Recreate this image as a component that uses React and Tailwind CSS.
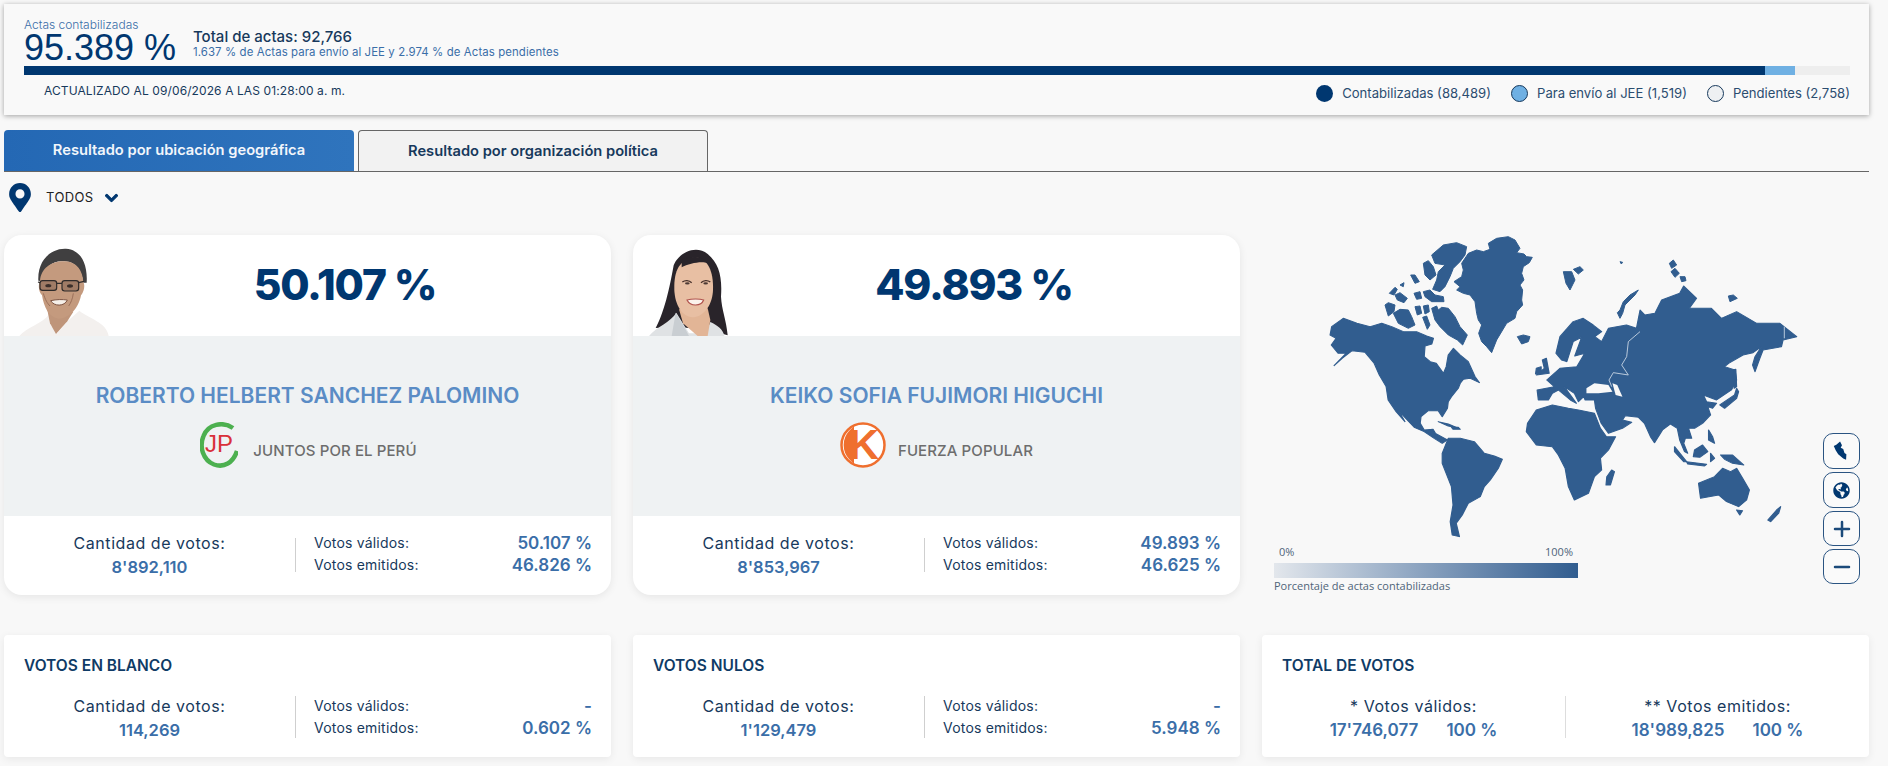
import { FaChevronDown, FaGlobeAmericas, FaMapMarkerAlt } from "react-icons/fa";
import { Minus, Plus } from "lucide-react";

const candidates = [
  {
    pct: "50.107 %",
    name: "ROBERTO HELBERT SANCHEZ PALOMINO",
    party: "JUNTOS POR EL PERÚ",
    votes: "8'892,110",
    valid: "50.107 %",
    cast: "46.826 %",
  },
  {
    pct: "49.893 %",
    name: "KEIKO SOFIA FUJIMORI HIGUCHI",
    party: "FUERZA POPULAR",
    votes: "8'853,967",
    valid: "49.893 %",
    cast: "46.625 %",
  },
];

const ManPhoto = () => (
  <svg width="110" height="96" viewBox="0 0 330 288" className="shrink-0 ml-[6px] blur-[0.6px]">
    <path d="M28 288 C50 262 96 252 118 222 L140 282 L172 244 L208 212 C236 236 290 246 296 288 Z" fill="#f3f0ee" />
    <path d="M112 210 L120 250 L138 282 L172 244 L190 215 Z" fill="#bf957a" />
    <path d="M85 122 C82 62 122 24 168 26 C208 28 234 66 230 128 L220 128 C214 84 194 66 164 64 C130 60 102 78 96 124 Z" fill="#403f40" />
    <path d="M90 124 C92 84 126 62 166 64 C200 66 218 92 220 126 C226 136 222 156 213 166 C206 206 176 236 146 236 C116 232 102 202 96 166 C86 156 84 134 90 124 Z" fill="#c49a7e" />
    <rect x="90" y="122" width="50" height="29" rx="8" fill="#a07c66" stroke="#2f2b2a" strokeWidth="3.5" />
    <rect x="156" y="122" width="50" height="31" rx="8" fill="#a07c66" stroke="#2f2b2a" strokeWidth="3.5" />
    <ellipse cx="115" cy="137" rx="9" ry="5" fill="#3b2f2a" />
    <ellipse cx="180" cy="138" rx="9" ry="5" fill="#3b2f2a" />
    <path d="M140 130 L156 130 M90 128 L84 126 M206 128 L222 124" stroke="#2f2b2a" strokeWidth="3.5" fill="none" />
    <path d="M122 182 C140 178 156 178 172 180 C164 200 132 200 122 182 Z" fill="#f5efe9" stroke="#7d5341" strokeWidth="3" />
    <path d="M100 160 C106 180 112 190 120 198 M190 160 C188 176 182 190 176 198" stroke="#9b705a" strokeWidth="3" fill="none" />
  </svg>
);

const WomanPhoto = () => (
  <svg width="110" height="96" viewBox="0 0 330 288" className="shrink-0 ml-[6px] blur-[0.6px]">
    <path d="M50 264 C80 210 96 120 104 76 C120 36 172 14 206 42 C240 70 250 110 246 170 C248 210 262 240 266 286 L210 270 L110 260 Z" fill="#29242a" />
    <path d="M30 288 C50 262 96 246 112 218 L150 280 L200 280 L214 246 C236 256 252 268 256 288 Z" fill="#dfe2e4" />
    <path d="M120 208 L132 250 L176 288 L206 288 L214 240 L206 205 Z" fill="#e2b596" />
    <path d="M106 150 C104 90 122 58 170 52 C206 56 224 94 222 150 C220 200 190 232 160 232 C130 230 108 196 106 150 Z" fill="#e8bfa3" />
    <path d="M128 58 C150 50 190 44 206 70 C190 62 150 70 128 82 Z" fill="#29242a" />
    <path d="M130 126 C138 120 150 120 158 128 M186 128 C194 120 206 120 214 126" stroke="#46302a" strokeWidth="4" fill="none" />
    <ellipse cx="145" cy="130" rx="7" ry="3.5" fill="#4d3a34" />
    <ellipse cx="200" cy="130" rx="7" ry="3.5" fill="#4d3a34" />
    <path d="M144 180 C158 176 182 176 194 180 C186 200 154 200 144 180 Z" fill="#fbf3ec" stroke="#b0524c" strokeWidth="3.5" />
    <path d="M110 218 L136 262 L150 288 L98 288 Z" fill="#c9ced2" />
  </svg>
);

const JuntosLogo = () => (
  <svg width="38" height="46" viewBox="0 0 38 46" className="shrink-0 ml-[2px]">
    <path d="M33 6 C23 -1 8 2 3.5 14 C-1 25 3 38 14 42.5 C24 46 33 41 37 29" fill="none" stroke="#4cb04f" strokeWidth="4.5" />
    <text x="19" y="30" textAnchor="middle" fontFamily="Liberation Sans, sans-serif" fontSize="24" fill="#d9303a">JP</text>
  </svg>
);

const FuerzaLogo = () => (
  <svg width="46" height="46" viewBox="0 0 46 46" className="shrink-0 -mr-[3px]">
    <circle cx="23" cy="23" r="21.5" fill="#fff" stroke="#ef6f2e" strokeWidth="2.5" />
    <path d="M9 9 A21 21 0 0 0 9 37 L14 42 L14 4 Z" fill="#ef6f2e" />
    <text x="24" y="37" textAnchor="middle" fontFamily="Liberation Sans, sans-serif" fontWeight="700" fontSize="42" fill="#ef6f2e">K</text>
  </svg>
);

const VoteRow = ({ votes, valid, cast, dividerClass }) => (
  <div className="flex">
    <div className="w-[291px] shrink-0 text-center">
      <p className="text-[16px] leading-[22px] tracking-[0.55px] text-[#17395c]">Cantidad de votos:</p>
      <p className="mt-[2px] text-[16.5px] leading-[22px] font-semibold text-[#3a6ea8]">{votes}</p>
    </div>
    <div className={`w-px bg-[#cfcfcf] ${dividerClass}`} />
    <div className="flex-1 pl-[18px] pr-[19px]">
      <div className="flex justify-between leading-[22px]">
        <span className="text-[14px] tracking-[0.2px] text-[#17395c]">Votos válidos:</span>
        <span className="text-[17px] font-semibold text-[#3a6ea8]">{valid}</span>
      </div>
      <div className="flex justify-between leading-[22px]">
        <span className="text-[14px] tracking-[0.2px] text-[#17395c]">Votos emitidos:</span>
        <span className="text-[17px] font-semibold text-[#3a6ea8]">{cast}</span>
      </div>
    </div>
  </div>
);

const CandidateCard = ({ data, photo, logo }) => (
  <div className="h-[360px] rounded-[18px] bg-white overflow-hidden shadow-[0_2px_8px_rgba(0,0,0,0.08)]">
    <div className="h-[101px] flex items-end relative">
      {photo}
      <p className="absolute inset-x-0 top-[22px] pl-[75px] text-center text-[42.5px] leading-[56px] font-extrabold tracking-[-1.2px] text-[#003770]">
        {data.pct}
      </p>
    </div>
    <div className="h-[180px] bg-[#eff2f3] flex flex-col items-center">
      <p className="mt-[47px] text-[21px] leading-[26px] font-semibold text-[#5a8cc5] whitespace-nowrap">{data.name}</p>
      <div className="mt-[13px] flex items-center gap-[15px]">
        {logo}
        <span className="mt-[12px] text-[15px] font-medium text-[#6d6d6d] tracking-[0.1px]">{data.party}</span>
      </div>
    </div>
    <div className="pt-[16px]">
      <VoteRow votes={data.votes} valid={data.valid} cast={data.cast} dividerClass="h-[34px] mt-[6px]" />
    </div>
  </div>
);

const SmallCard = ({ title, children }) => (
  <div className="h-[122px] rounded-[4px] bg-white shadow-[0_2px_8px_rgba(0,0,0,0.07)] pt-[21px]">
    <h3 className="pl-[20px] text-[15.5px] leading-[20px] font-semibold text-[#0f3b66]">{title}</h3>
    <div className="mt-[19px]">{children}</div>
  </div>
);

const TotalCol = ({ label, votes }) => (
  <div className="w-[303px] text-center">
    <p className="text-[16px] leading-[22px] tracking-[0.55px] text-[#17395c]">{label}</p>
    <p className="mt-[2px] flex justify-center gap-[28px] text-[17px] leading-[22px] font-semibold text-[#3a6ea8]">
      <span>{votes}</span>
      <span>100 %</span>
    </p>
  </div>
);

const WorldMap = () => (
  <svg width="607" height="310" viewBox="2 15 607 310" className="block">
    <g fill="#315d8f" stroke="#315d8f" strokeLinejoin="round">
      {/* groenlandia y canada, coords del recorte */}
      <g transform="translate(60 10) scale(0.3333)" strokeWidth="3">
        <path d="M505 40 L530 25 L565 20 L585 30 L600 55 L590 68 L612 72 L620 80 L637 82 L628 98 L610 110 L605 130 L612 150 L600 165 L608 180 L605 210 L608 225 L590 245 L585 265 L560 280 L548 300 L530 330 L515 368 L500 350 L485 335 L476 310 L485 285 L475 270 L470 250 L465 215 L450 195 L430 190 L410 180 L420 170 L402 155 L425 140 L430 120 L425 100 L445 70 L470 60 L490 65 L510 58 Z" />
        <path d="M592 320 L610 315 L630 320 L625 335 L605 342 L598 330 Z" />
        <path d="M335 75 L370 45 L410 38 L440 50 L435 75 L420 95 L400 115 L390 140 L375 170 L360 185 L338 178 L350 150 L355 125 L375 105 L345 100 Z" />
        <path d="M310 100 L325 92 L340 110 L348 135 L330 150 L315 135 Z" />
        <path d="M208 190 L225 172 L232 178 L222 195 Z" />
        <path d="M225 195 L240 188 L262 205 L252 218 L232 210 Z" />
        <path d="M272 135 L285 135 L298 155 L285 160 Z" />
        <path d="M240 165 L252 158 L250 170 Z" />
        <path d="M282 190 L300 185 L305 205 L290 208 Z" />
        <path d="M310 185 L330 180 L345 195 L370 200 L372 215 L335 215 L315 200 Z" />
        <path d="M195 225 L205 218 L225 225 L222 245 L205 258 Z" />
        <path d="M220 250 L240 238 L265 240 L275 260 L285 285 L265 295 L235 280 Z" />
        <path d="M285 230 L300 228 L305 250 L292 255 Z" />
        <path d="M310 228 L325 225 L328 245 L315 252 Z" />
        <path d="M335 235 L350 228 L355 240 L365 232 L385 235 L405 260 L420 290 L442 315 L428 345 L412 330 L385 315 L360 290 L345 270 Z" />
        <path d="M308 262 L320 258 L330 285 L322 298 Z" />
      </g>
      {/* islas del artico */}
      <g transform="translate(280 10) scale(0.3333)" strokeWidth="3">
        <path d="M295 180 L270 195 L250 215 L240 240 L232 248 L240 265 L248 250 L255 225 L285 195 Z" />
        <path d="M70 125 L95 125 L105 150 L90 180 L78 160 Z" />
        <path d="M100 118 L120 110 L130 120 L115 132 Z" />
        <path d="M388 100 L400 90 L410 105 L395 115 Z" />
        <path d="M393 125 L405 115 L418 130 L405 142 Z" />
        <path d="M420 140 L435 140 L438 152 L425 155 Z" />
        <path d="M565 198 L580 195 L592 205 L570 215 Z" />
        <path d="M240 95 L248 97 L244 102 Z" />
      </g>
      <g transform="scale(0.4005 0.3333)" strokeWidth="3">
        <path d="M179 320 L208 295 L242 310 L275 320 L304 310 L329 320 L358 335 L391 335 L416 348 L433 355 L429 372 L412 378 L410 410 L425 425 L440 430 L458 460 L465 440 L470 405 L483 385 L500 405 L520 425 L537 470 L548 488 L525 475 L508 478 L500 490 L495 505 L478 530 L470 545 L468 565 L455 590 L445 572 L420 572 L402 590 L400 610 L410 630 L432 628 L438 640 L468 660 L455 670 L435 655 L410 635 L385 622 L360 590 L345 570 L362 605 L340 575 L320 540 L315 500 L298 465 L285 430 L262 397 L230 392 L205 415 L185 437 L215 400 L195 400 L178 375 L190 355 L175 345 Z" />
        <path d="M445 605 L470 612 L495 625 L470 618 Z" />
        <path d="M478 622 L495 622 L500 628 L482 628 Z" />
        <path d="M470 655 L500 655 L535 665 L560 700 L585 708 L605 718 L595 745 L575 780 L560 800 L550 830 L520 850 L505 885 L490 910 L498 950 L480 945 L475 905 L482 855 L478 800 L455 730 L455 700 Z" />
        <path d="M690 570 L730 555 L770 565 L795 570 L835 580 L850 625 L865 650 L888 650 L870 690 L850 715 L853 750 L835 770 L820 820 L785 840 L770 800 L762 745 L745 705 L730 680 L690 675 L665 635 L668 610 Z" />
        <path d="M878 750 L885 755 L875 795 L864 795 L866 770 Z" />
        {/* eurasia */}
        <path d="M716 480 L749 445 L791 440 L811 400 L786 408 L803 352 L782 365 L766 425 L753 420 L739 400 L749 350 L782 305 L807 295 L832 315 L853 335 L836 350 L853 365 L870 325 L915 315 L940 325 L949 270 L961 285 L986 280 L1003 240 L1048 220 L1058 198 L1090 235 L1072 265 L1127 265 L1152 295 L1190 275 L1240 310 L1298 310 L1340 350 L1306 360 L1302 380 L1256 390 L1248 415 L1236 455 L1230 435 L1236 410 L1252 380 L1231 398 L1206 405 L1170 430 L1160 440 L1186 450 L1190 480 L1177 510 L1140 540 L1107 525 L1115 545 L1140 550 L1130 565 L1118 560 L1125 585 L1105 610 L1085 625 L1070 625 L1078 655 L1062 655 L1058 670 L1068 700 L1060 695 L1048 660 L1042 625 L1025 612 L1005 630 L985 668 L975 650 L960 610 L945 592 L912 587 L905 600 L928 607 L905 625 L870 640 L852 610 L838 565 L835 540 L812 540 L808 530 L795 545 L785 520 L760 500 L790 550 L775 540 L745 510 L730 520 L720 540 L695 540 L692 510 L735 500 Z" />
        <path d="M705 420 L715 415 L722 460 L690 465 L710 445 Z" />
        <path d="M690 445 L702 440 L702 460 L688 462 Z" />
        <path d="M1148 555 L1185 525 L1190 505 L1195 515 L1190 535 L1160 565 Z" />
        <path d="M1180 450 L1188 448 L1190 500 L1184 505 Z" />
        <path d="M1035 680 L1065 725 L1058 725 L1035 695 Z" />
        <path d="M1085 690 L1105 675 L1118 695 L1098 712 L1082 710 Z" />
        <path d="M1065 725 L1115 733 L1110 738 L1068 732 Z" />
        <path d="M1125 700 L1135 715 L1125 725 Z" />
        <path d="M1120 630 L1130 650 L1135 670 L1120 660 Z" />
        <path d="M1150 705 L1180 705 L1208 735 L1180 730 L1160 718 Z" />
        <path d="M1095 790 L1135 770 L1155 745 L1175 755 L1190 745 L1205 775 L1222 810 L1215 840 L1195 860 L1165 845 L1145 825 L1100 835 Z" />
        <path d="M1190 870 L1205 872 L1198 885 Z" />
        <path d="M1268 900 L1290 870 L1300 860 L1295 880 L1275 905 Z" />
        <path d="M815 505 L835 490 L870 495 L880 515 L845 520 L815 520 Z" fill="#f8f8f8" stroke="none" />
        <path d="M880 490 L892 495 L905 530 L888 525 Z" fill="#f8f8f8" stroke="none" />
      </g>
      <g transform="translate(280 10) scale(0.3333)" fill="none" stroke="#d4dfea" strokeWidth="2.5">
        <path d="M300 305 L265 335 L260 380 L245 405 L265 435 L220 428 L207 450 L215 470" />
        <path d="M733 290 L733 325" />
      </g>
    </g>
  </svg>
);

const PeruIcon = () => (
  <svg width="37" height="36" viewBox="39 24 111 108">
    <path d="M70 62 L78 58 L90 48 L96 60 L92 68 L100 72 L104 84 L110 88 L109 106 L100 102 L84 88 L76 76 Z" fill="#003770" />
  </svg>
);

const MapButton = ({ children, className }) => (
  <button className={`w-[37px] flex items-center justify-center rounded-[10px] border-[1.5px] border-[#2a5482] bg-[#fafafa] text-[#1b4a7a] ${className}`}>
    {children}
  </button>
);

const App = () => {
  return (
    <div className="h-[766px] overflow-hidden bg-[#f8f8f8] pl-[4px] pr-[19px] pt-[4px] font-['Inter',sans-serif]">
      {/* BARRA DE ACTAS */}
      <div className="h-[111px] bg-[#f9f9f9] pl-[20px] pr-[19px] pt-[14px] shadow-[0_1px_5px_rgba(0,0,0,0.35)]">
        <div className="flex h-[48px]">
          <div className="w-[169px] shrink-0">
            <p className="text-[12px] leading-[14px] font-light text-[#3a6ea8]">Actas contabilizadas</p>
            <p className="font-['Liberation_Sans',sans-serif] text-[36px] leading-[31px] text-[#003770] whitespace-nowrap">95.389 %</p>
          </div>
          <div className="pt-[10px]">
            <p className="text-[15px] leading-[18px] font-medium text-[#17395c]">Total de actas: 92,766</p>
            <p className="-mt-[1px] text-[11.4px] leading-[14px] tracking-[0.1px] text-[#3a6ea8]">
              1.637 % de Actas para envío al JEE y 2.974 % de Actas pendientes
            </p>
          </div>
        </div>
        <div className="flex h-[9px] bg-[#eeeeee]">
          <div className="w-[1741px] bg-[#003770]" />
          <div className="w-[30px] bg-[#6fb0e3]" />
        </div>
        <div className="flex justify-between">
          <p className="pl-[20px] pt-[9px] text-[12px] leading-[14px] tracking-[0.1px] text-[#17395c]">
            ACTUALIZADO AL 09/06/2026 A LAS 01:28:00 a. m.
          </p>
          <div className="flex items-center gap-[20px] pt-[10px] text-[13.1px] leading-[17px] text-[#2b4d70]">
            <span className="flex items-center gap-[9px]">
              <i className="size-[17px] rounded-full bg-[#003770]" />
              Contabilizadas (88,489)
            </span>
            <span className="flex items-center gap-[9px]">
              <i className="size-[17px] rounded-full border border-[#17395c] bg-[#6fb0e3]" />
              Para envío al JEE (1,519)
            </span>
            <span className="flex items-center gap-[9px]">
              <i className="size-[17px] rounded-full border border-[#17395c] bg-[#eef0f2]" />
              Pendientes (2,758)
            </span>
          </div>
        </div>
      </div>

      {/* TABS */}
      <div className="mt-[15px] flex h-[42px] gap-[4px] border-b border-[#666666]">
        <button className="w-[350px] rounded-t-[4px] bg-gradient-to-r from-[#2468b4] to-[#2f74bd] text-[14.7px] font-semibold text-[#f2f6fb]">
          Resultado por ubicación geográfica
        </button>
        <button className="w-[350px] rounded-t-[4px] border border-b-0 border-[#666666] bg-[#f2f2f2] text-[14.7px] font-semibold text-[#17395c]">
          Resultado por organización política
        </button>
      </div>

      {/* FILTRO */}
      <div className="mt-[11px] flex h-[29px] items-center pl-[5px]">
        <FaMapMarkerAlt className="h-[29px] w-[22px] text-[#003770]" />
        <span className="ml-[15px] text-[13px] tracking-[0.4px] text-[#222222]">TODOS</span>
        <FaChevronDown stroke="currentColor" strokeWidth={40} className="ml-[10px] h-[14px] w-[15px] text-[#003770]" />
      </div>

      {/* RESULTADOS */}
      <div className="mt-[23px] grid grid-cols-3 gap-x-[22px]">
        <CandidateCard data={candidates[0]} photo={<ManPhoto />} logo={<JuntosLogo />} />
        <CandidateCard data={candidates[1]} photo={<WomanPhoto />} logo={<FuerzaLogo />} />
        <div className="relative h-[360px]">
          <WorldMap />
          <div className="ml-[12px] w-[304px]">
            <div className="flex justify-between px-[5px] font-['Open_Sans',sans-serif] text-[11px] leading-[14px] text-[#4f6478]">
              <span>0%</span>
              <span>100%</span>
            </div>
            <div className="mt-[4px] h-[15px] bg-gradient-to-r from-[#e3e7ec] to-[#315d8f]" />
            <p className="font-['Open_Sans',sans-serif] text-[11px] leading-[16px] text-[#4f6478]">Porcentaje de actas contabilizadas</p>
          </div>
          <div className="absolute right-[9px] top-[198px] flex flex-col gap-[3px]">
            <MapButton className="h-[36px]"><PeruIcon /></MapButton>
            <MapButton className="h-[36px]"><FaGlobeAmericas className="size-[17px] text-[#003770]" /></MapButton>
            <MapButton className="h-[35px]"><Plus size={24} strokeWidth={2.5} /></MapButton>
            <MapButton className="h-[35px]"><Minus size={24} strokeWidth={2.5} /></MapButton>
          </div>
        </div>
      </div>

      <div className="mt-[40px] grid grid-cols-3 gap-x-[22px]">
        <SmallCard title="VOTOS EN BLANCO">
          <VoteRow votes="114,269" valid="-" cast="0.602 %" dividerClass="h-[42px] mt-[1px]" />
        </SmallCard>
        <SmallCard title="VOTOS NULOS">
          <VoteRow votes="1'129,479" valid="-" cast="5.948 %" dividerClass="h-[42px] mt-[1px]" />
        </SmallCard>
        <SmallCard title="TOTAL DE VOTOS">
          <div className="flex">
            <TotalCol label="* Votos válidos:" votes="17'746,077" />
            <div className="h-[42px] mt-[1px] w-px bg-[#dddddd]" />
            <TotalCol label="** Votos emitidos:" votes="18'989,825" />
          </div>
        </SmallCard>
      </div>
    </div>
  );
};

export default App;
